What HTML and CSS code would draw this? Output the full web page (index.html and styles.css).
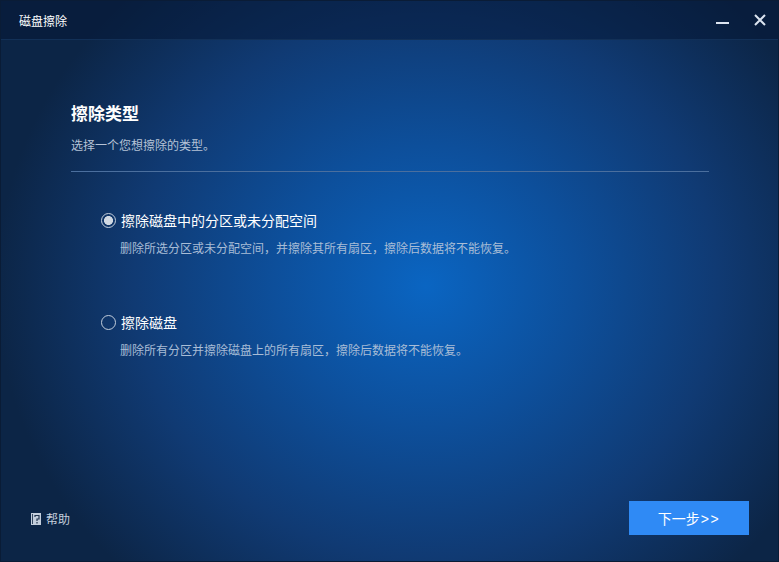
FILE: index.html
```html
<!DOCTYPE html>
<html lang="zh-CN">
<head>
<meta charset="utf-8">
<title>磁盘擦除</title>
<link rel="stylesheet" href="styles.css">
</head>
<body>
<div class="window">
  <header class="titlebar">
    <span class="title">磁盘擦除</span>
    <div class="controls">
      <svg class="ctl" width="14" height="14" viewBox="0 0 14 14"><rect x="0" y="9" width="13" height="2" fill="#dbe4f0"/></svg>
      <svg class="ctl" width="14" height="14" viewBox="0 0 14 14"><path d="M2 2L12 12M12 2L2 12" stroke="#dbe4f0" stroke-width="2" fill="none"/></svg>
    </div>
  </header>
  <main class="content">
    <h1 class="heading">擦除类型</h1>
    <p class="sub">选择一个您想擦除的类型。</p>
    <div class="rule"></div>
    <div class="options">
      <div class="option">
        <div class="opt-row"><span class="radio checked"></span><span class="opt-label">擦除磁盘中的分区或未分配空间</span></div>
        <p class="opt-desc">删除所选分区或未分配空间，并擦除其所有扇区，擦除后数据将不能恢复。</p>
      </div>
      <div class="option">
        <div class="opt-row"><span class="radio"></span><span class="opt-label">擦除磁盘</span></div>
        <p class="opt-desc">删除所有分区并擦除磁盘上的所有扇区，擦除后数据将不能恢复。</p>
      </div>
    </div>
  </main>
  <footer class="footer">
    <div class="help">
      <svg width="10" height="12" viewBox="0 0 10 12"><rect width="10" height="12" fill="#c3cedc"/><rect x="1" y="1" width="1" height="10" fill="#33465f"/><path d="M4 4V2.5H8V6H6V8M6 9V10.5" stroke="#22344e" stroke-width="1.2" fill="none"/></svg>
      <span>帮助</span>
    </div>
    <button class="next">下一步<span class="arrows">&gt;&gt;</span></button>
  </footer>
</div>
</body>
</html>
```
FILE: styles.css
```css
* { box-sizing: border-box; }
html, body { margin: 0; height: 100%; }
body { font-family: "Noto Sans CJK SC", "Liberation Sans", sans-serif; overflow: hidden; }
.window {
  width: 779px; height: 562px; display: flex; flex-direction: column;
  background: radial-gradient(ellipse 430px 400px at 425px 285px, #0a65c2 0%, #0d4f9b 35%, #103a73 68%, #0c2546 100%);
  background-color: #0b2444;
  border: 1px solid #0a1c36;
}
.titlebar {
  height: 39px; flex: none; display: flex; align-items: center; justify-content: space-between;
  padding: 0 11px 0 18px; background: rgba(6, 24, 54, 0.55); border-bottom: 1px solid #123057;
}
.title { font-size: 12px; color: #fff; }
.controls { display: flex; gap: 23px; }
.ctl { display: block; }
.content { flex: 1; padding: 0 69px 0 70px; }
.heading { margin: 61px 0 0; font-size: 17px; line-height: 24px; font-weight: 700; color: #fff; }
.sub { margin: 11px 0 0; font-size: 12px; line-height: 18px; color: #b5c3d6; }
.rule { height: 1px; margin-top: 17px; background: #4b6f9e; }
.options { padding: 37px 0 0 30px; display: flex; flex-direction: column; gap: 54px; }
.opt-row { display: flex; align-items: center; gap: 5px; height: 22px; }
.radio { width: 15px; height: 15px; border: 1.5px solid #c3cedc; border-radius: 50%; flex: none; }
.radio.checked { background: radial-gradient(circle, #d0d8e2 0 4.2px, transparent 4.8px); }
.opt-label { font-size: 14px; color: #fff; line-height: 22px; }
.opt-desc { margin: 8px 0 0 19px; font-size: 12px; line-height: 18px; color: #a9bdd6; }
.footer { flex: none; height: 60px; padding: 0 29px 0 30px; display: flex; justify-content: space-between; align-items: flex-start; }
.help { display: flex; align-items: center; gap: 5px; font-size: 12px; color: #c4cfdd; margin-top: 9px; line-height: 18px; }
.next {
  width: 120px; height: 34px; border: 0; background: #2f8af5; color: #fff;
  font-family: inherit; font-size: 14px; padding: 0;
}
.arrows { font-family: "Liberation Sans", sans-serif; letter-spacing: 1.5px; margin-left: 1px; }
```
